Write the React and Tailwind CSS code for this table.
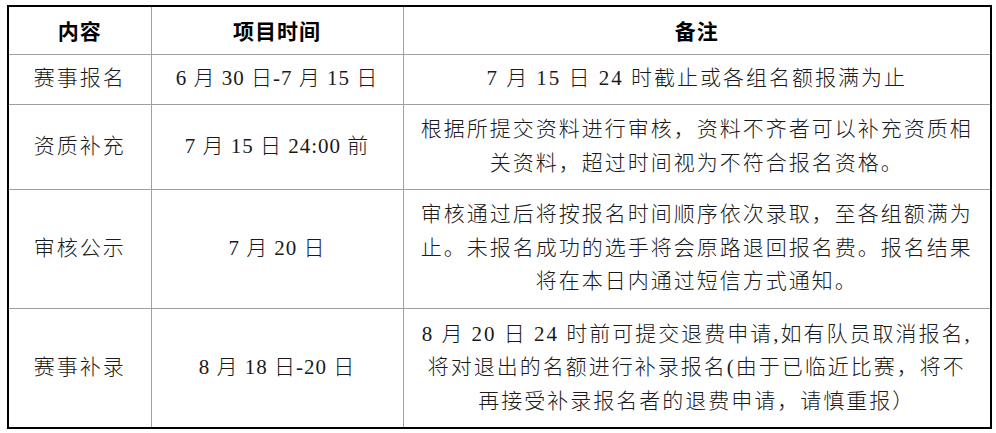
import React from "react";

const rows = [
  {
    item: "赛事报名",
    time: "6 月 30 日-7 月 15 日",
    note: ["7 月 15 日 24 时截止或各组名额报满为止"],
    h: "h-[50px]",
  },
  {
    item: "资质补充",
    time: "7 月 15 日 24:00 前",
    note: ["根据所提交资料进行审核，资料不齐者可以补充资质相", "关资料，超过时间视为不符合报名资格。"],
    h: "h-[85px]",
  },
  {
    item: "审核公示",
    time: "7 月 20 日",
    note: [
      "审核通过后将按报名时间顺序依次录取，至各组额满为",
      "止。未报名成功的选手将会原路退回报名费。报名结果",
      "将在本日内通过短信方式通知。",
    ],
    h: "h-[119px]",
  },
  {
    item: "赛事补录",
    time: "8 月 18 日-20 日",
    note: [
      "8 月 20 日 24 时前可提交退费申请,如有队员取消报名,",
      "将对退出的名额进行补录报名(由于已临近比赛，将不",
      "再接受补录报名者的退费申请，请慎重报）",
    ],
    h: "h-[120px]",
  },
];

const font = { fontFamily: '"Liberation Serif", "Noto Sans CJK SC", serif' };

export default function App() {
  return (
    <div className="w-[996px] h-[433px] bg-white pl-[7px] pt-[5px]" style={font}>
      <table className="table-fixed border-collapse border-2 border-black w-[983px] text-[21px] leading-[33.5px] text-[#1a1a1a] font-light">
        <colgroup>
          <col className="w-[143px]" />
          <col className="w-[252px]" />
          <col className="w-[588px]" />
        </colgroup>
        <thead>
          <tr className="h-[48px]">
            {["内容", "项目时间", "备注"].map((t) => (
              <th
                key={t}
                className="border border-[#a0a0a0] text-center align-middle font-bold text-black tracking-[1px] p-0"
                style={{ fontFamily: '"Noto Sans CJK SC", sans-serif' }}
              >
                {t}
              </th>
            ))}
          </tr>
        </thead>
        <tbody>
          {rows.map((r) => (
            <tr key={r.item} className={r.h}>
              <td className="border border-[#a0a0a0] text-center align-middle tracking-[2px] p-0 whitespace-nowrap">
                {r.item}
              </td>
              <td className="border border-[#a0a0a0] text-center align-middle tracking-[1px] p-0 whitespace-nowrap">
                {r.time}
              </td>
              <td className="border border-[#a0a0a0] text-center align-middle tracking-[2px] p-0 whitespace-nowrap">
                {r.note.map((line, i) => (
                  <div key={i}>{line}</div>
                ))}
              </td>
            </tr>
          ))}
        </tbody>
      </table>
    </div>
  );
}
